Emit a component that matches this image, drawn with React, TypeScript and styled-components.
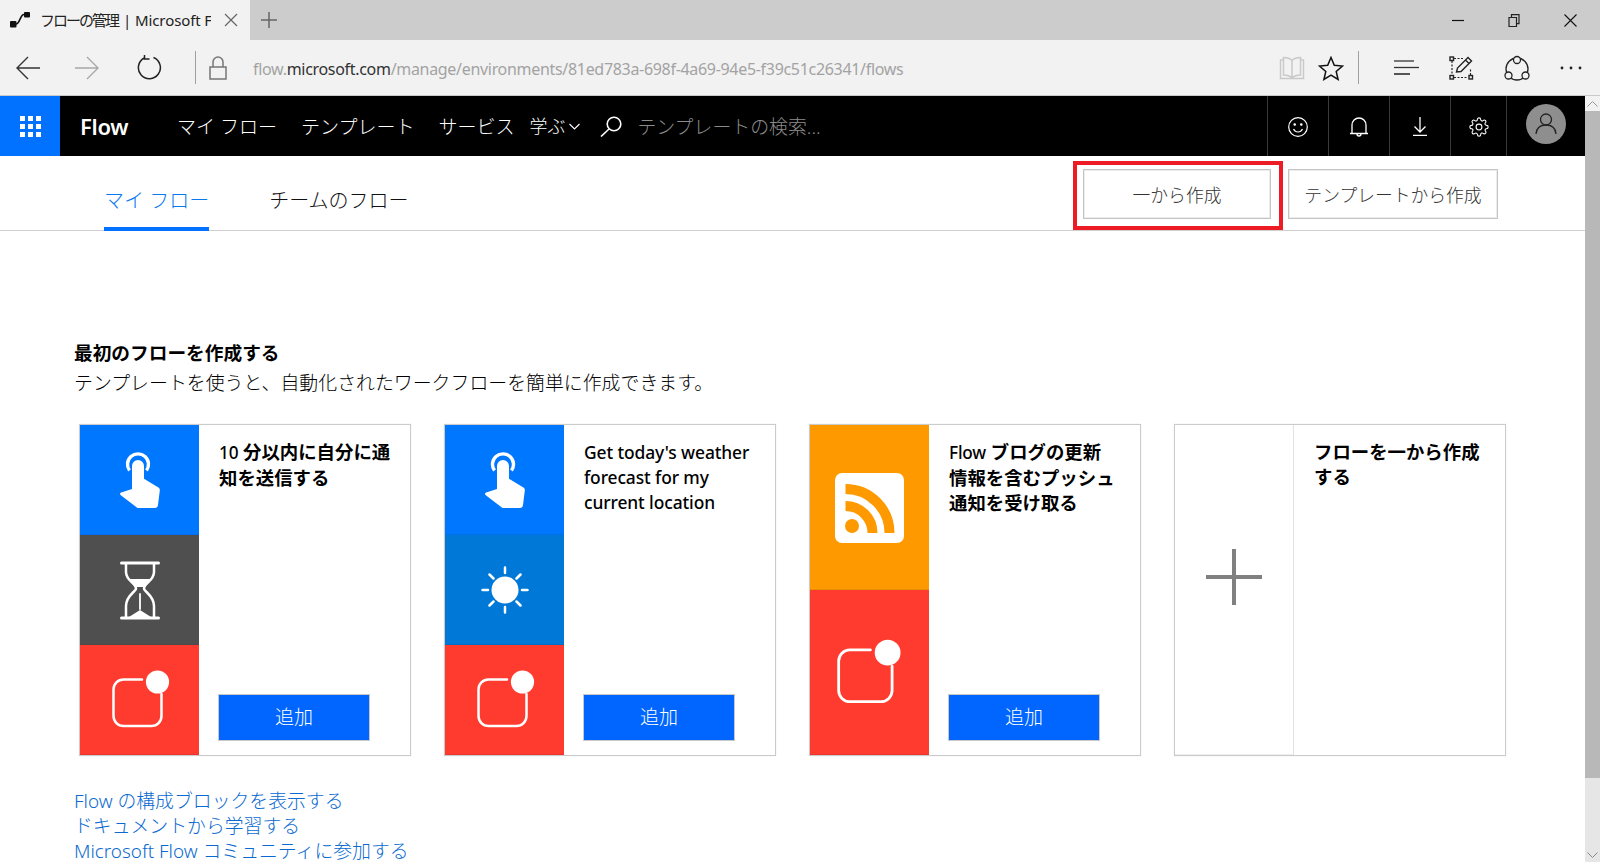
import React from "react";
import styled, { createGlobalStyle } from "styled-components";

const Global = createGlobalStyle`
  html, body { margin: 0; height: 100%; overflow: hidden; background: #fff; }
  body { font-family: "Noto Sans", "Noto Sans CJK JP", sans-serif; color: #000; }
  #root { height: 100%; }
`;

const Page = styled.div`display: flex; flex-direction: column; width: 1600px; height: 862px; overflow: hidden;`;

const TabStrip = styled.div`display: flex; align-items: stretch; height: 40px; background: #ccc; flex: none;`;
const Tab = styled.div`width: 250px; background: #f2f2f2; display: flex; align-items: center; padding-left: 10px; box-sizing: border-box; position: relative;`;
const TabTitle = styled.div`width: 171px; margin-left: 10px; overflow: hidden; white-space: nowrap; font-size: 15px; letter-spacing: -0.1px; color: #222; line-height: 40px; flex: none;`;
const TabKana = styled.span`font-size: 15px; letter-spacing: -2px; margin-right: 5px;`;
const TabClose = styled.svg`margin-left: 13px; flex: none;`;
const NewTab = styled.svg`margin: 12px 0 0 11px; flex: none;`;
const WindowControls = styled.div`margin-left: auto; display: flex; align-items: center; gap: 44px; padding-right: 23px;`;

const Toolbar = styled.div`height: 55px; flex: none; background: #f2f2f2; border-bottom: 1px solid #c9c9c9; display: flex; align-items: center; position: relative;`;
const ToolButton = styled.div<{ $w: number; $drop?: number }>`width: ${p => p.$w}px; flex: none; display: flex; justify-content: center; align-items: center; padding-top: ${p => p.$drop ?? 0}px;`;
const ToolSep = styled.div<{ $ml: number; $mr: number }>`width: 1px; height: 33px; background: #a0a0a0; flex: none; margin: 0 ${p => p.$mr}px 0 ${p => p.$ml}px;`;
const LockIcon = styled.svg`flex: none; margin-top: 1px;`;
const Url = styled.div`width: 1040px; padding-left: 26px; box-sizing: border-box; flex: none; font-size: 16px; letter-spacing: -0.31px; color: #a3a3a3; white-space: nowrap; line-height: 55px; padding-top: 3px;`;
const Host = styled.span`color: #333;`;
const BookIcon = styled.svg`flex: none; margin-left: 12px; margin-top: 1px;`;
const ToolIcon = styled.svg`flex: none;`;
const ToolGap = styled.div<{ $w: number }>`width: ${p => p.$w}px; flex: none;`;

const Body = styled.div`flex: 1; display: flex; min-height: 0;`;
const Main = styled.div`flex: 1; min-width: 0; display: flex; flex-direction: column;`;

const Scrollbar = styled.div`width: 15px; flex: none; background: #e6e6e6; display: flex; flex-direction: column;`;
const ScrollEnd = styled.div<{ $top?: boolean }>`height: 15px; flex: none; display: flex; align-items: center; justify-content: center; background: ${p => (p.$top ? "#f2f2f2" : "#e6e6e6")};`;
const ScrollThumb = styled.div`height: 667px; background: #b8b8b8; flex: none;`;
const ScrollTrack = styled.div`flex: 1;`;

const Nav = styled.nav`height: 60px; flex: none; background: #000; color: #fff; display: flex; align-items: center;`;
const Launcher = styled.div`width: 60px; height: 100%; background: #0072ff; display: grid; grid-template-columns: repeat(3, 5px); grid-auto-rows: 5px; gap: 3px; align-content: center; justify-content: center; flex: none;`;
const LauncherDot = styled.i`background: #fff; display: block;`;
const Brand = styled.div`margin-left: 20px; width: 97px; font-size: 22px; font-weight: 600; letter-spacing: -0.3px; flex: none;`;
const NavMenu = styled.div`display: flex; align-items: center; gap: 24px; flex: none; padding-top: 2px;`;
const NavLink = styled.span`font-size: 19px; white-space: nowrap; font-weight: 300; line-height: 60px;`;
const LearnLink = styled.span`margin-left: 15px; font-size: 18px; white-space: nowrap; font-weight: 300; display: flex; align-items: center; gap: 4px; line-height: 60px; flex: none;`;
const Search = styled.div`margin-left: 20px; display: flex; align-items: center; gap: 15px; font-size: 18.9px; color: #8c8c8c; font-weight: 300; white-space: nowrap; flex: none;`;
const NavRight = styled.div`margin-left: auto; display: flex; height: 100%; flex: none;`;
const NavCell = styled.div<{ $w: number }>`width: ${p => p.$w}px; height: 100%; border-left: 1px solid #3a3a3a; box-sizing: border-box; display: flex; align-items: center; justify-content: center; padding-top: 1px;`;
const Avatar = styled.div`width: 79px; height: 100%; border-left: 1px solid #3a3a3a; box-sizing: border-box; display: flex; align-items: center; justify-content: center; padding-bottom: 4px;`;

const SubNav = styled.div`height: 75px; flex: none; box-sizing: border-box; border-bottom: 1px solid #cfcfcf; display: flex; padding-left: 104px; padding-right: 87px;`;
const SubTab = styled.div<{ $active?: boolean }>`height: 75px; box-sizing: border-box; margin-right: 60px; font-size: 20px; font-weight: 300; line-height: 90px; white-space: nowrap; color: ${p => (p.$active ? "#0a78f0" : "#111")}; border-bottom: 4px solid ${p => (p.$active ? "#0072ff" : "transparent")};`;
const Actions = styled.div`margin-left: auto; display: flex; gap: 17px; padding-top: 13px; align-items: flex-start;`;
const ActionButton = styled.div<{ $w: number; $marked?: boolean }>`
  position: relative; width: ${p => p.$w}px; height: 50px; box-sizing: border-box; border: 1px solid #c4c4c4; box-shadow: inset 0 0 0 1px #ececec; background: #fff;
  display: flex; align-items: center; justify-content: center; font-size: 17.8px; font-weight: 300; color: #333; white-space: nowrap;
  ${p => p.$marked && `&::after { content: ""; position: absolute; top: -9px; left: -11px; right: -13px; bottom: -12px; border: 4px solid #ed1c24; }`}
`;

const Content = styled.div`flex: 1; min-height: 0; padding: 107px 0 0 74px;`;
const Heading = styled.div`font-size: 18.7px; font-weight: 700; line-height: 30px; white-space: nowrap;`;
const Lead = styled.div`font-size: 18.9px; font-weight: 300; line-height: 30px; color: #000; white-space: nowrap;`;
const Cards = styled.div`display: flex; gap: 33px; margin: 26px 0 0 5px;`;
const Card = styled.div`width: 332px; height: 332px; box-sizing: border-box; border: 1px solid #cbcbcb; box-shadow: 0 0 1px #ddd; display: flex; background: #fff;`;
const Panels = styled.div<{ $plain?: boolean }>`width: 119px; flex: none; display: flex; flex-direction: column; ${p => p.$plain && "border-right: 1px solid #e2e2e2; box-sizing: border-box;"}`;
const Panel = styled.div<{ $bg: string }>`flex: 1; background: ${p => p.$bg}; display: flex; align-items: center; justify-content: center; box-shadow: inset 0 -1px 0 rgba(0,0,0,.07);`;
const CardBody = styled.div`flex: 1; min-width: 0; display: flex; flex-direction: column; padding: 14px 0 14px 19px;`;
const CardTitle = styled.div<{ $latin?: boolean }>`padding-left: 1px; padding-top: ${p => (p.$latin ? 1 : 0)}px; font-size: ${p => (p.$latin ? 17.4 : 18.4)}px; font-weight: ${p => (p.$latin ? 500 : 600)}; letter-spacing: ${p => (p.$latin ? "-0.1px" : "0")}; line-height: 25px; white-space: nowrap; color: #000;`;
const TitleLine = styled.div``;
const LatinWord = styled.span`font-size: 17.2px; font-weight: 500; letter-spacing: -0.2px;`;
const AddButton = styled.div`margin-top: auto; width: 152px; height: 47px; box-sizing: border-box; border: 1px solid #c8c8c8; background: #0066ff; color: #fff; font-size: 19px; font-weight: 300; display: flex; align-items: center; justify-content: center; padding-bottom: 3px;`;
const Links = styled.div`margin-top: 33px; display: flex; flex-direction: column;`;
const DocLink = styled.a`font-size: 18.85px; font-weight: 300; line-height: 25px; color: #0a6ad0; white-space: nowrap;`;

const NotifySvg = styled.svg<{ $big?: boolean }>`margin: ${p => (p.$big ? "0 0 4px 4px" : "0 0 4px 6px")};`;
const PlusSvg = styled.svg`margin-bottom: 27px;`;

const Touch = () => (
  <svg width="40" height="56" viewBox="0 0 40 56" fill="none">
    <path d="M9.500 18.500A10.500 10.500 0 1 1 26.500 18.500" stroke="#fff" strokeWidth="3.400" />
    <path d="M12 14a6 6 0 0 1 12 0V26.700l14 8.500c1.500.9 2 1.800 1.800 3.300L38 53c-.2 1.700-1.300 3-3.200 3H18.500c-1 0-1.600-.3-2.300-1L.8 43.300c-1.200-1.100-1-2.300.4-2.800L12 37z" fill="#fff" />
  </svg>
);
const Hourglass = () => (
  <svg width="40" height="59" viewBox="0 0 40 59" fill="none" stroke="#fff" strokeWidth="2.500" strokeLinecap="round">
    <path d="M1.500 2h37M1.500 57h37" strokeWidth="3" />
    <path d="M6 3v8c0 9 10 11 10 16.500 0 3-10 7-10 17.500v12M34 3v8c0 9-10 11-10 16.500 0 3 10 7 10 17.500v12" />
    <path d="M8.500 18h23c-1 3-4.500 5-6.500 8H15c-2-3-5.500-5-6.500-8z" fill="#fff" stroke="none" />
    <path d="M20 33v15" strokeWidth="1.800" />
    <path d="M9 56l11-7 11 7z" fill="#fff" stroke="none" />
  </svg>
);
const Sun = () => (
  <svg width="48" height="48" viewBox="-24 -24 48 48" stroke="#fff" strokeWidth="2.500" strokeLinecap="round">
    <circle r="13.500" fill="#fff" stroke="none" />
    <path d="M0-22.500V-17M0 17v5.500M-22.500 0H-17M17 0h5.500M-15.500-15.500l4 4M15.500-15.500l-4 4M-15.500 15.500l4-4M15.500 15.500l-4-4" />
  </svg>
);
const Notify = ({ big }: { big?: boolean }) => (
  <NotifySvg $big={big} width={big ? 69 : 62} height={big ? 69 : 62} viewBox="0 0 62 62" fill="none">
    <path d="M30 12.500H11.500A10 10 0 0 0 1.500 22.500V49a10 10 0 0 0 10 10h28a10 10 0 0 0 10-10V27" stroke="#fff" strokeWidth="2.500" strokeLinecap="round" />
    <circle cx="45.500" cy="15" r="11.600" fill="#fff" />
  </NotifySvg>
);
const Rss = () => (
  <svg width="69" height="70" viewBox="0 0 69 70">
    <rect width="69" height="70" rx="7" fill="#fff" />
    <circle cx="17" cy="53" r="7" fill="#ff9900" />
    <path d="M10.500 16A44 44 0 0 1 54.500 60M10.500 33A27 27 0 0 1 37.500 60" fill="none" stroke="#ff9900" strokeWidth="10" />
  </svg>
);
const Plus = () => (
  <PlusSvg width="56" height="56" viewBox="0 0 56 56" stroke="#808080" strokeWidth="4"><path d="M28 0v56M0 28h56" /></PlusSvg>
);

const Red = "#ff3a2f";

export default function App() {
  return (
    <>
      <Global />
      <Page>
        <TabStrip>
          <Tab>
            <svg width="20" height="20" viewBox="0 0 20 20" style={{ flex: "none" }}>
              <rect x="0" y="11" width="6.500" height="6.500" rx="1" fill="#111" />
              <rect x="14" y="2" width="6" height="5.500" rx="1" fill="#111" />
              <path d="M6 14c4 0 4-9.500 8-9.500" fill="none" stroke="#111" strokeWidth="1.700" />
            </svg>
            <TabTitle><TabKana>フローの管理</TabKana>| Microsoft Flow</TabTitle>
            <TabClose width="14" height="14" viewBox="0 0 14 14" stroke="#666" strokeWidth="1.200"><path d="M1 1l12 12M13 1L1 13" /></TabClose>
          </Tab>
          <NewTab width="16" height="16" viewBox="0 0 16 16" stroke="#666" strokeWidth="1.500"><path d="M8 0v16M0 8h16" /></NewTab>
          <WindowControls>
            <svg width="12" height="12" viewBox="0 0 12 12" stroke="#111" strokeWidth="1.200"><path d="M0 6.500h12" /></svg>
            <svg width="12" height="13" viewBox="0 0 12 13" fill="none" stroke="#222" strokeWidth="1.200"><path d="M1 3.500h7.500v9H1zM3.500 3.500V.6H11v9H8.500" /></svg>
            <svg width="13" height="13" viewBox="0 0 13 13" stroke="#111" strokeWidth="1.100"><path d="M.5.5l12 12M12.500.5l-12 12" /></svg>
          </WindowControls>
        </TabStrip>
        <Toolbar>
          <ToolButton $w={56}>
            <svg width="24" height="24" viewBox="0 0 24 24" fill="none" stroke="#333" strokeWidth="1.400"><path d="M24 12H1M12 1L1 12l11 11" /></svg>
          </ToolButton>
          <ToolButton $w={62}>
            <svg width="24" height="24" viewBox="0 0 24 24" fill="none" stroke="#a8a8a8" strokeWidth="1.400"><path d="M0 12h23M12 1l11 11-11 11" /></svg>
          </ToolButton>
          <ToolButton $w={62}>
            <svg width="25" height="25" viewBox="0 0 25 25" fill="none" stroke="#222" strokeWidth="1.500"><path d="M16.500 2.500A11 11 0 1 1 7.200 3M7.500 0v4h5" /></svg>
          </ToolButton>
          <ToolSep $ml={15} $mr={13} />
          <LockIcon width="18" height="24" viewBox="0 0 18 24" fill="none" stroke="#767676" strokeWidth="1.500">
            <rect x="1" y="11" width="16" height="12" /><path d="M4 11V6a5 5 0 0 1 10 0v5" />
          </LockIcon>
          <Url>flow.<Host>microsoft.com</Host>/manage/environments/81ed783a-698f-4a69-94e5-f39c51c26341/flows</Url>
          <BookIcon width="26" height="24" viewBox="0 0 26 24" fill="none" stroke="#c9c9c9" strokeWidth="1.500">
            <path d="M13 4.500C11 2.500 8 1.500 4.500 1.500V19c3.500 0 6.500 1 8.500 3 2-2 5-3 8.500-3V1.500C18 1.500 15 2.500 13 4.500zM13 4.500V22M4.500 4H1.500v18.500h23V4h-3" />
          </BookIcon>
          <ToolButton $w={52} $drop={1}>
            <svg width="26" height="25" viewBox="0 0 26 25" fill="none" stroke="#111" strokeWidth="1.500"><path d="M13 1.500l3.300 7.800 8.200.7-6.300 5.400 1.900 8.100L13 19.200l-7.100 4.300 1.900-8.100L1.500 10l8.200-.7z" /></svg>
          </ToolButton>
          <ToolSep $ml={1} $mr={35} />
          <ToolIcon width="26" height="16" viewBox="0 0 26 16" fill="none">
            <path d="M0 1h20" stroke="#333" strokeWidth="1.300" /><path d="M0 7.500h25" stroke="#333" strokeWidth="1.300" /><path d="M0 14h16" stroke="#555" strokeWidth="2" />
          </ToolIcon>
          <ToolGap $w={29} />
          <ToolIcon width="25" height="24" viewBox="0 0 25 24" fill="none" stroke="#222">
            <path d="M3 5v14M5 21.500h14M21.500 19V13M5 2.500h9" strokeWidth="1.200" strokeDasharray="2 1.500" />
            <rect x="1" y="1" width="3.500" height="3.500" strokeWidth="1.400" /><rect x="1" y="19.500" width="3.500" height="3.500" strokeWidth="1.400" /><rect x="20" y="19.500" width="3.500" height="3.500" strokeWidth="1.400" />
            <path d="M7.500 16l1-4L19 1.500l3.500 3.500L12 15.500zM16.500 4l3.500 3.500" strokeWidth="1.400" />
          </ToolIcon>
          <ToolGap $w={30} />
          <ToolIcon width="26" height="26" viewBox="0 0 26 26" fill="none" stroke="#222" strokeWidth="1.300">
            <circle cx="13" cy="14" r="11" />
            <circle cx="13" cy="5" r="3.500" fill="#f2f2f2" /><circle cx="4.500" cy="20.500" r="3.500" fill="#f2f2f2" /><circle cx="21.500" cy="20.500" r="3.500" fill="#f2f2f2" />
          </ToolIcon>
          <ToolGap $w={30} />
          <ToolIcon width="22" height="4" viewBox="0 0 22 4" fill="#222">
            <circle cx="2" cy="2" r="1.400" /><circle cx="11" cy="2" r="1.400" /><circle cx="20" cy="2" r="1.400" />
          </ToolIcon>
        </Toolbar>
        <Body>
          <Main>
            <Nav>
              <Launcher>{Array.from({ length: 9 }, (_, i) => <LauncherDot key={i} />)}</Launcher>
              <Brand>Flow</Brand>
              <NavMenu>
                <NavLink>マイ フロー</NavLink>
                <NavLink>テンプレート</NavLink>
                <NavLink>サービス</NavLink>
              </NavMenu>
              <LearnLink>学ぶ
                <svg width="11" height="7" viewBox="0 0 11 7" fill="none" stroke="#fff" strokeWidth="1.100"><path d="M.5 1l5 5 5-5" /></svg>
              </LearnLink>
              <Search>
                <svg width="22" height="21" viewBox="0 0 22 21" fill="none" stroke="#fff" strokeWidth="1.600"><circle cx="14" cy="8" r="6.800" /><path d="M9 13L1 20.500" /></svg>
                テンプレートの検索...
              </Search>
              <NavRight>
                <NavCell $w={61}>
                  <svg width="20" height="20" viewBox="0 0 20 20" fill="none" stroke="#fff" strokeWidth="1.200"><circle cx="10" cy="10" r="9.300" /><path d="M5.500 12c1 2 2.500 3 4.500 3s3.500-1 4.500-3" /><circle cx="6.700" cy="7.500" r=".7" fill="#fff" /><circle cx="13.300" cy="7.500" r=".7" fill="#fff" /></svg>
                </NavCell>
                <NavCell $w={61}>
                  <svg width="20" height="21" viewBox="0 0 20 21" fill="none" stroke="#fff" strokeWidth="1.300"><path d="M1 17.500h18M3 17.500V9a7 7 0 0 1 14 0v8.500M8 18a2 2 0 0 0 4 0" /></svg>
                </NavCell>
                <NavCell $w={61}>
                  <svg width="14" height="19" viewBox="0 0 14 19" fill="none" stroke="#fff" strokeWidth="1.300"><path d="M7 0v15M1.500 9.500L7 15l5.500-5.500M0 18.300h14" /></svg>
                </NavCell>
                <NavCell $w={56}>
                  <svg width="20" height="20" viewBox="0 0 24 24" fill="none" stroke="#fff" strokeWidth="1.300"><circle cx="12" cy="12" r="3.500" /><path d="M19.400 15a1.650 1.650 0 0 0 .33 1.820l.06.06a2 2 0 1 1-2.830 2.830l-.06-.06a1.650 1.650 0 0 0-1.820-.33 1.650 1.650 0 0 0-1 1.510V21a2 2 0 1 1-4 0v-.09A1.650 1.650 0 0 0 9 19.400a1.650 1.650 0 0 0-1.820.33l-.06.06a2 2 0 1 1-2.830-2.830l.06-.06a1.650 1.650 0 0 0 .33-1.820 1.650 1.650 0 0 0-1.510-1H3a2 2 0 1 1 0-4h.09A1.650 1.650 0 0 0 4.600 9a1.650 1.650 0 0 0-.33-1.820l-.06-.06a2 2 0 1 1 2.830-2.830l.06.06a1.650 1.650 0 0 0 1.820.33H9a1.650 1.650 0 0 0 1-1.510V3a2 2 0 1 1 4 0v.09a1.650 1.650 0 0 0 1 1.510 1.650 1.650 0 0 0 1.820-.33l.06-.06a2 2 0 1 1 2.830 2.830l-.06.06a1.650 1.650 0 0 0-.33 1.820V9a1.650 1.650 0 0 0 1.510 1H21a2 2 0 1 1 0 4h-.09a1.650 1.650 0 0 0-1.510 1z" /></svg>
                </NavCell>
                <Avatar>
                  <svg width="40" height="40" viewBox="0 0 40 40" fill="none"><circle cx="20" cy="20" r="20" fill="#8e8e8e" /><circle cx="20" cy="15.500" r="5.500" stroke="#222" strokeWidth="1.300" /><path d="M10 30c.5-6 4.500-9 10-9s9.500 3 10 9" stroke="#222" strokeWidth="1.300" /></svg>
                </Avatar>
              </NavRight>
            </Nav>
            <SubNav>
              <SubTab $active>マイ フロー</SubTab>
              <SubTab>チームのフロー</SubTab>
              <Actions>
                <ActionButton $w={188} $marked>一から作成</ActionButton>
                <ActionButton $w={210}>テンプレートから作成</ActionButton>
              </Actions>
            </SubNav>
            <Content>
              <Heading>最初のフローを作成する</Heading>
              <Lead>テンプレートを使うと、自動化されたワークフローを簡単に作成できます。</Lead>
              <Cards>
                <Card>
                  <Panels>
                    <Panel $bg="#0077ff"><Touch /></Panel>
                    <Panel $bg="#4e4f4e"><Hourglass /></Panel>
                    <Panel $bg={Red}><Notify /></Panel>
                  </Panels>
                  <CardBody>
                    <CardTitle><TitleLine><LatinWord>10</LatinWord> 分以内に自分に通</TitleLine><TitleLine>知を送信する</TitleLine></CardTitle>
                    <AddButton>追加</AddButton>
                  </CardBody>
                </Card>
                <Card>
                  <Panels>
                    <Panel $bg="#0077ff"><Touch /></Panel>
                    <Panel $bg="#0078d7"><Sun /></Panel>
                    <Panel $bg={Red}><Notify /></Panel>
                  </Panels>
                  <CardBody>
                    <CardTitle $latin>
                      <TitleLine>Get today's weather</TitleLine>
                      <TitleLine>forecast for my</TitleLine>
                      <TitleLine>current location</TitleLine>
                    </CardTitle>
                    <AddButton>追加</AddButton>
                  </CardBody>
                </Card>
                <Card>
                  <Panels>
                    <Panel $bg="#ff9900"><Rss /></Panel>
                    <Panel $bg={Red}><Notify big /></Panel>
                  </Panels>
                  <CardBody>
                    <CardTitle><TitleLine><LatinWord>Flow</LatinWord> ブログの更新</TitleLine><TitleLine>情報を含むプッシュ</TitleLine><TitleLine>通知を受け取る</TitleLine></CardTitle>
                    <AddButton>追加</AddButton>
                  </CardBody>
                </Card>
                <Card>
                  <Panels $plain>
                    <Panel $bg="#fff"><Plus /></Panel>
                  </Panels>
                  <CardBody>
                    <CardTitle><TitleLine>フローを一から作成</TitleLine><TitleLine>する</TitleLine></CardTitle>
                  </CardBody>
                </Card>
              </Cards>
              <Links>
                <DocLink>Flow の構成ブロックを表示する</DocLink>
                <DocLink>ドキュメントから学習する</DocLink>
                <DocLink>Microsoft Flow コミュニティに参加する</DocLink>
              </Links>
            </Content>
          </Main>
          <Scrollbar>
            <ScrollEnd $top><svg width="11" height="6" viewBox="0 0 11 6" fill="none" stroke="#999"><path d="M.5 5.500l5-5 5 5" /></svg></ScrollEnd>
            <ScrollThumb />
            <ScrollTrack />
            <ScrollEnd><svg width="11" height="6" viewBox="0 0 11 6" fill="none" stroke="#888"><path d="M.5.5l5 5 5-5" /></svg></ScrollEnd>
          </Scrollbar>
        </Body>
      </Page>
    </>
  );
}
